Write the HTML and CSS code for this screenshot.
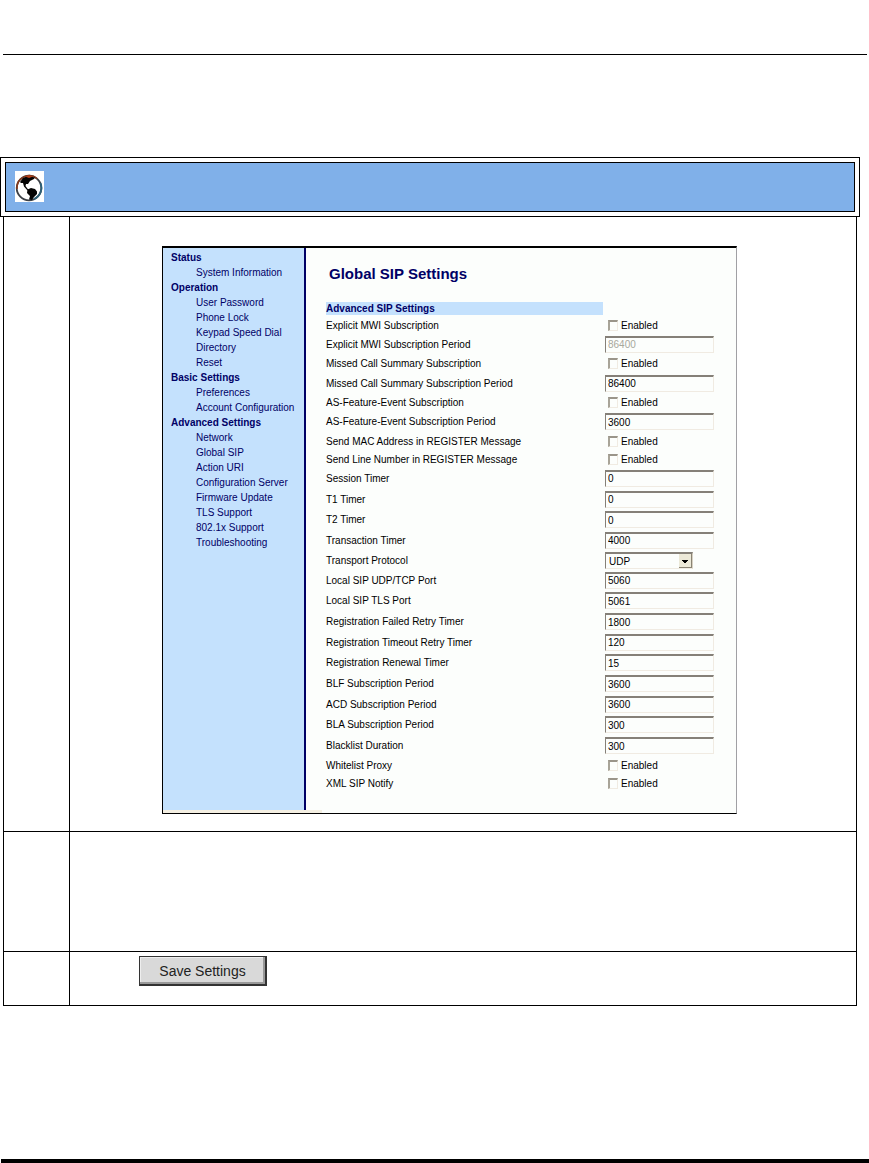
FILE: index.html
```html
<!DOCTYPE html>
<html lang="en">
<head>
    <meta charset="UTF-8">
    <meta name="viewport" content="width=device-width, initial-scale=1.0">
    <title>Global SIP Settings</title>
    <link rel="stylesheet" href="styles.css">
</head>
<body>

<header class="page-header"></header>

<main class="guide">
    <div class="banner">
        <div class="banner-inner">
            <svg class="globe" viewBox="0 0 29 31" aria-hidden="true">
                <rect width="29" height="31" fill="#fff"/>
                <circle cx="14" cy="17" r="12.3" fill="#fff" stroke="#3b3f45" stroke-width="1.8"/>
                <path d="M2 18 A12.3 12.3 0 0 1 22 7.500" fill="none" stroke="#8a3a1c" stroke-width="1.500"/>
                <path d="M25.500 12 A12.3 12.3 0 0 1 19 28" fill="none" stroke="#2d6076" stroke-width="1.800"/>
                <path d="M5 11 L8 7 L13 5 L20 6.500 L19 8 L15 10 L13 13 L11 13 L10.500 15 L13.500 19 L12.500 19.500 L9 15.500 L8 12 L6 12 Z" fill="#050505"/>
                <path d="M12.500 18.500 L16 17 L20 18 L22 20.500 L22 23 L19 26 L17 29 L14 28.500 L15 25 L12 22 Z" fill="#050505"/>
                <path d="M10 5.500 L14 4.500 L18 5.500 L14 7 Z" fill="#b8401c"/>
            </svg>
        </div>
    </div>

    <div class="steps">
        <div class="step">
            <div class="step-number"></div>
            <div class="step-body">
                <div class="panel">
                    <nav class="menu">
                        <h2>Status</h2>
                        <a href="#">System Information</a>
                        <h2>Operation</h2>
                        <a href="#">User Password</a>
                        <a href="#">Phone Lock</a>
                        <a href="#">Keypad Speed Dial</a>
                        <a href="#">Directory</a>
                        <a href="#">Reset</a>
                        <h2>Basic Settings</h2>
                        <a href="#">Preferences</a>
                        <a href="#">Account Configuration</a>
                        <h2>Advanced Settings</h2>
                        <a href="#">Network</a>
                        <a href="#">Global SIP</a>
                        <a href="#">Action URI</a>
                        <a href="#">Configuration Server</a>
                        <a href="#">Firmware Update</a>
                        <a href="#">TLS Support</a>
                        <a href="#">802.1x Support</a>
                        <a href="#">Troubleshooting</a>
                    </nav>

                    <form class="settings" id="settings">
                        <h1>Global SIP Settings</h1>
                        <h2>Advanced SIP Settings</h2>

                        <div class="row check">
                            <span>Explicit MWI Subscription</span>
                            <label><input type="checkbox" aria-label="Explicit MWI Subscription Enabled"> Enabled</label>
                        </div>
                        <div class="row">
                            <label for="mwi-period">Explicit MWI Subscription Period</label>
                            <input type="text" id="mwi-period" value="86400" disabled>
                        </div>
                        <div class="row check">
                            <span>Missed Call Summary Subscription</span>
                            <label><input type="checkbox" aria-label="Missed Call Summary Subscription Enabled"> Enabled</label>
                        </div>
                        <div class="row">
                            <label for="missed-period">Missed Call Summary Subscription Period</label>
                            <input type="text" id="missed-period" value="86400">
                        </div>
                        <div class="row check">
                            <span>AS-Feature-Event Subscription</span>
                            <label><input type="checkbox" aria-label="AS-Feature-Event Subscription Enabled"> Enabled</label>
                        </div>
                        <div class="row">
                            <label for="as-period">AS-Feature-Event Subscription Period</label>
                            <input type="text" id="as-period" value="3600">
                        </div>
                        <div class="row check">
                            <span>Send MAC Address in REGISTER Message</span>
                            <label><input type="checkbox" aria-label="Send MAC Address Enabled"> Enabled</label>
                        </div>
                        <div class="row check">
                            <span>Send Line Number in REGISTER Message</span>
                            <label><input type="checkbox" aria-label="Send Line Number Enabled"> Enabled</label>
                        </div>
                        <div class="row">
                            <label for="session-timer">Session Timer</label>
                            <input type="text" id="session-timer" value="0">
                        </div>
                        <div class="row">
                            <label for="t1-timer">T1 Timer</label>
                            <input type="text" id="t1-timer" value="0">
                        </div>
                        <div class="row">
                            <label for="t2-timer">T2 Timer</label>
                            <input type="text" id="t2-timer" value="0">
                        </div>
                        <div class="row">
                            <label for="transaction-timer">Transaction Timer</label>
                            <input type="text" id="transaction-timer" value="4000">
                        </div>
                        <div class="row choice">
                            <label for="transport">Transport Protocol</label>
                            <select id="transport">
                                <option selected>UDP</option>
                                <option>TCP</option>
                                <option>TLS</option>
                            </select>
                        </div>
                        <div class="row">
                            <label for="udp-port">Local SIP UDP/TCP Port</label>
                            <input type="text" id="udp-port" value="5060">
                        </div>
                        <div class="row">
                            <label for="tls-port">Local SIP TLS Port</label>
                            <input type="text" id="tls-port" value="5061">
                        </div>
                        <div class="row">
                            <label for="reg-failed">Registration Failed Retry Timer</label>
                            <input type="text" id="reg-failed" value="1800">
                        </div>
                        <div class="row">
                            <label for="reg-timeout">Registration Timeout Retry Timer</label>
                            <input type="text" id="reg-timeout" value="120">
                        </div>
                        <div class="row">
                            <label for="reg-renewal">Registration Renewal Timer</label>
                            <input type="text" id="reg-renewal" value="15">
                        </div>
                        <div class="row">
                            <label for="blf-period">BLF Subscription Period</label>
                            <input type="text" id="blf-period" value="3600">
                        </div>
                        <div class="row">
                            <label for="acd-period">ACD Subscription Period</label>
                            <input type="text" id="acd-period" value="3600">
                        </div>
                        <div class="row">
                            <label for="bla-period">BLA Subscription Period</label>
                            <input type="text" id="bla-period" value="300">
                        </div>
                        <div class="row">
                            <label for="blacklist">Blacklist Duration</label>
                            <input type="text" id="blacklist" value="300">
                        </div>
                        <div class="row check">
                            <span>Whitelist Proxy</span>
                            <label><input type="checkbox" aria-label="Whitelist Proxy Enabled"> Enabled</label>
                        </div>
                        <div class="row check">
                            <span>XML SIP Notify</span>
                            <label><input type="checkbox" aria-label="XML SIP Notify Enabled"> Enabled</label>
                        </div>
                    </form>
                </div>
            </div>
        </div>

        <div class="step step-text">
            <div class="step-number"></div>
            <div class="step-body"></div>
        </div>

        <div class="step step-save">
            <div class="step-number"></div>
            <div class="step-body">
                <button type="submit" form="settings" class="save">Save Settings</button>
            </div>
        </div>
    </div>
</main>

<footer class="page-footer"></footer>

</body>
</html>
```

FILE: styles.css
```css
:root {
    --navy: #000066;
    --menuBlue: #c4e1fd;
    --bannerBlue: #80b0e9;
}

* {
    box-sizing: border-box;
}

body {
    margin: 0;
    min-height: 100vh;
    display: flex;
    flex-direction: column;
    background: #fff;
    font-family: "Liberation Sans", Arial, sans-serif;
    font-size: 10px;
    line-height: 15px;
    color: #000;
}

.page-header {
    height: 55px;
    margin: 0 2px 0 3px;
    border-bottom: 1px solid #000;
}

.page-footer {
    height: 4px;
    margin: auto 0 0 1px;
    background: #000;
}

.guide {
    margin: 102px 9px 40px 0;
}

/* Blue title bar with double frame */
.banner {
    padding: 4px;
    border: 1px solid #000;
}

.banner-inner {
    padding: 8px 9px 9px;
    border: 1px solid #000;
    background: var(--bannerBlue);
}

.globe {
    display: block;
    width: 29px;
    height: 31px;
}

/* Steps */
.steps {
    margin: 0 3px;
    border: 1px solid #000;
    border-top: none;
}

.step {
    display: flex;
}

.step + .step {
    border-top: 1px solid #000;
}

.step-number {
    flex: 0 0 66px;
    border-right: 1px solid #000;
}

.step-body {
    flex: 1;
    padding: 29px 92px 17px;
}

.step-text {
    min-height: 120px;
}

.step-save .step-body {
    padding: 4px 69px 19px;
}

/* Phone web interface */
.panel {
    display: flex;
    max-width: 575px;
    min-height: 568px;
    padding-bottom: 3px;
    border: 1px solid #000;
    border-top-width: 2px;
    border-right-color: #a0a0a4;
    background: linear-gradient(#f4efe2, #f4efe2) left bottom / 159px 3px no-repeat #fcfefc;
}

.menu {
    flex: 0 0 143px;
    padding: 2px 0 0 8px;
    border-right: 2px solid var(--navy);
    background: var(--menuBlue);
}

.menu h2,
.settings h2 {
    margin: 0;
    font-size: 10px;
    font-weight: bold;
    color: var(--navy);
}

.menu a {
    display: block;
    padding-left: 25px;
    color: var(--navy);
    text-decoration: none;
}

.settings {
    flex: 1;
    display: flex;
    flex-direction: column;
    padding: 16px 22px 18px 20px;
}

.settings h1 {
    margin: 0 0 18px 3px;
    font-size: 15px;
    line-height: 20px;
    color: var(--navy);
}

.settings h2 {
    width: 277px;
    margin-bottom: 1px;
    line-height: 13px;
    background: var(--menuBlue);
}

.row {
    flex: 1 0 20px;
    display: grid;
    grid-template-columns: 279px 1fr;
    align-items: center;
}

.row.check {
    flex: 0 0 18px;
}

.row.choice {
    flex: 0 0 19px;
}

.check label {
    display: flex;
    align-items: center;
    gap: 3px;
    padding-left: 3px;
}

input,
select {
    font: inherit;
    color: #000;
}

input[type="text"] {
    width: 109px;
    height: 17px;
    padding: 0 2px;
    border: 1px solid;
    border-width: 2px 1px 1px;
    border-color: #858078 #f0ebe2 #f0ebe2 #858078;
    background: #fcfefc;
}

input[type="text"]:disabled {
    color: #a8a89c;
}

input[type="checkbox"] {
    appearance: none;
    width: 10px;
    height: 11px;
    margin: 0;
    border: 1px solid;
    border-width: 2px 1px 1px 2px;
    border-color: #9a958a #f0ebe2 #f0ebe2 #a8a498;
    background: #fcfefc;
}

input[type="checkbox"]:checked {
    background: var(--navy);
}

select {
    appearance: none;
    width: 88px;
    height: 17px;
    padding: 0 3px;
    border: 1px solid;
    border-width: 2px 1px 1px;
    border-color: #858078 #d8d2c4 #f0ebe2 #858078;
    border-radius: 0;
    /* arrow button: glyph, bevels, face */
    background:
        linear-gradient(#000, #000) right 4px top 6px / 6px 1px no-repeat,
        linear-gradient(#000, #000) right 5px top 7px / 4px 1px no-repeat,
        linear-gradient(#000, #000) right 6px top 8px / 2px 1px no-repeat,
        linear-gradient(#8a8474, #8a8474) right 0 top 0 / 1px 14px no-repeat,
        linear-gradient(#8a8474, #8a8474) right 0 bottom 0 / 13px 1px no-repeat,
        linear-gradient(#ece9d8, #ece9d8) right 0 top 0 / 13px 14px no-repeat,
        #fcfefc;
}

.save {
    display: block;
    width: 128px;
    height: 30px;
    padding: 0;
    border: 1px solid #333;
    border-width: 1px 2px 2px 1px;
    box-shadow: inset -2px -2px #999, inset 1px 1px #eee;
    background: #d9d9d9;
    font-family: "Liberation Sans", Arial, sans-serif;
    font-size: 14px;
    color: #222;
}
```
